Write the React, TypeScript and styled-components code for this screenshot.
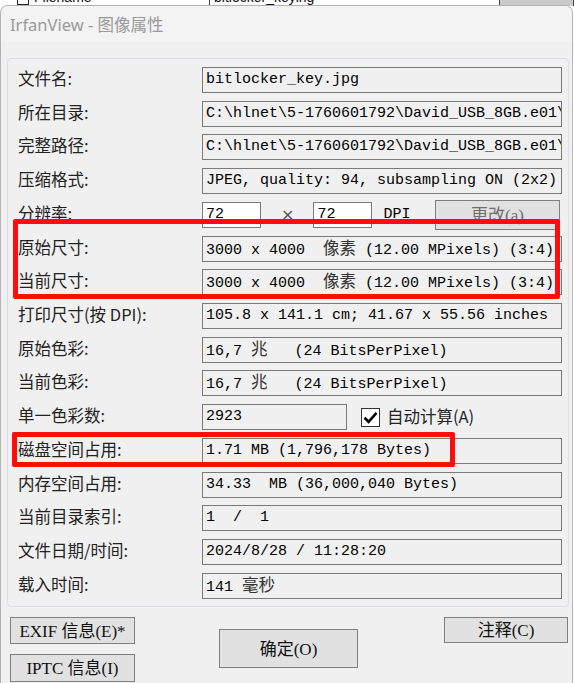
import React from 'react';
import styled, { createGlobalStyle } from 'styled-components';

const GlobalStyle = createGlobalStyle`
  html, body { margin: 0; padding: 0; background: #f0f0f0; }
  body { font-family: "Noto Sans CJK SC", "Noto Sans", sans-serif; }
`;

const Screen = styled.div`
  position: relative;
  width: 574px;
  height: 683px;
  overflow: hidden;
  background: #ffffff;
  display: flex;
  flex-direction: column;
`;

const BehindStrip = styled.div`
  flex: none;
  height: 6px;
  overflow: hidden;
  display: flex;
  align-items: flex-start;
  background: #ffffff;
  font-family: "Liberation Sans", sans-serif;
  font-size: 14px;
  color: #111;
`;

const BehindCell = styled.div<{ $w: number; $dark?: boolean }>`
  flex: none;
  width: ${(p) => p.$w}px;
  height: 6px;
  box-sizing: border-box;
  border-right: 1px solid #444;
  background: ${(p) => (p.$dark ? '#c9c9c9' : '#ffffff')};
  overflow: hidden;
  display: flex;
  gap: 5px;
  padding-left: 4px;
`;

const BehindText = styled.span`
  display: block;
  margin-top: -11px;
  line-height: 16px;
  white-space: nowrap;
`;

const BehindBox = styled.span`
  display: block;
  margin-top: -8px;
  width: 10px;
  height: 11px;
  border: 1px solid #222;
  flex: none;
`;

const Window = styled.div`
  flex: 1;
  margin-top: -1px;
  width: 573px;
  box-sizing: border-box;
  display: flex;
  flex-direction: column;
  background: #f0f0f0;
  border: 1px solid #b4b4b4;
  border-bottom: none;
  border-radius: 8px 8px 0 0;
  overflow: hidden;
`;

const TitleBar = styled.div`
  flex: none;
  height: 36px;
  display: flex;
  align-items: center;
  padding-left: 9px;
  background: #f3f3f3;
  color: #9a9a9a;
  font-family: "Noto Sans", "Noto Sans CJK SC", sans-serif;
  font-size: 16.5px;
`;

const Body = styled.div`
  display: flex;
  flex-direction: column;
  padding: 16px 0 0 6px;
`;

const GroupBox = styled.div`
  width: 562px;
  box-sizing: border-box;
  border: 1px solid #d7dee4;
  border-radius: 4px;
  padding: 8px 0 7px 10px;
  display: grid;
  grid-template-columns: 184px 360px;
  grid-auto-rows: 26px;
  row-gap: 7.73px;
  align-items: center;
`;

const Label = styled.div`
  font-family: "Noto Sans CJK SC", sans-serif;
  font-size: 16.5px;
  color: #222;
  white-space: pre;
  line-height: 22px;
  padding-bottom: 4px;
`;

const Field = styled.div<{ $white?: boolean; $w?: number }>`
  box-sizing: border-box;
  height: 26px;
  width: ${(p) => (p.$w ? `${p.$w}px` : '100%')};
  border: 1px solid #7a7a7a;
  background: ${(p) => (p.$white ? '#ffffff' : '#f0f0f0')};
  padding: 0 3px;
  font-family: "Liberation Mono", "Noto Sans CJK SC", monospace;
  font-size: 15px;
  line-height: 23px;
  color: #000;
  white-space: pre;
  overflow: hidden;
`;

const Cjk = styled.span`
  font-family: "Noto Sans CJK SC", sans-serif;
  font-size: 16.5px;
  line-height: 20px;
  color: #333;
`;

const InlineRow = styled.div`
  display: flex;
  align-items: center;
  height: 26px;
`;

const Times = styled.span`
  margin: 0 19px 0 20px;
  font-family: "DejaVu Sans", sans-serif;
  font-size: 16px;
  color: #555;
`;

const Unit = styled.span`
  margin-left: 11px;
  font-family: "Liberation Mono", monospace;
  font-size: 15px;
  color: #000;
`;

const Button = styled.button<{ $w: number; $h: number; $muted?: boolean }>`
  box-sizing: border-box;
  width: ${(p) => p.$w}px;
  height: ${(p) => p.$h}px;
  flex: none;
  padding: 0 0 2px;
  border: 1px solid #7f7f7f;
  background: #e1e1e1;
  color: ${(p) => (p.$muted ? '#6d6d6d' : '#111')};
  font-family: "Liberation Serif", "Noto Sans CJK SC", serif;
  font-size: 17px;
  display: flex;
  align-items: center;
  justify-content: center;
  white-space: pre;
`;

const ChangeButton = styled(Button)`
  margin-left: auto;
  margin-right: 2px;
`;

const Check = styled.span`
  margin-left: 14px;
  width: 19px;
  height: 19px;
  box-sizing: border-box;
  border: 1px solid #333;
  background: #fff;
  display: flex;
  align-items: center;
  justify-content: center;
  flex: none;
`;

const CheckLabel = styled.span`
  margin-left: 7px;
  padding-bottom: 3px;
  font-family: "Noto Sans CJK SC", sans-serif;
  font-size: 16.5px;
  color: #222;
  white-space: pre;
`;

const Footer = styled.div`
  display: flex;
  align-items: flex-start;
  padding: 10px 0 0 3px;
`;

const ButtonStack = styled.div`
  display: flex;
  flex-direction: column;
  gap: 10px;
`;

const OkButton = styled(Button)`
  margin: 12px 0 0 84px;
`;

const NoteButton = styled(Button)`
  margin-left: 86px;
`;

const Highlight = styled.div`
  position: absolute;
  box-sizing: border-box;
  border: 5px solid #ff0d0d;
  border-radius: 2px;
  pointer-events: none;
`;

type Row = { label: string; value: React.ReactNode };

const dim = (
  <>
    3000 x 4000  <Cjk>像素</Cjk> (12.00 MPixels) (3:4)
  </>
);
const color = (
  <>
    16,7 <Cjk>兆</Cjk>   (24 BitsPerPixel)
  </>
);

const rowsTop: Row[] = [
  { label: '文件名:', value: 'bitlocker_key.jpg' },
  { label: '所在目录:', value: 'C:\\hlnet\\5-1760601792\\David_USB_8GB.e01\\' },
  { label: '完整路径:', value: 'C:\\hlnet\\5-1760601792\\David_USB_8GB.e01\\' },
  { label: '压缩格式:', value: 'JPEG, quality: 94, subsampling ON (2x2)' },
];

const rowsMid: Row[] = [
  { label: '原始尺寸:', value: dim },
  { label: '当前尺寸:', value: dim },
  { label: '打印尺寸(按 DPI):', value: '105.8 x 141.1 cm; 41.67 x 55.56 inches' },
  { label: '原始色彩:', value: color },
  { label: '当前色彩:', value: color },
];

const rowsBottom: Row[] = [
  { label: '磁盘空间占用:', value: '1.71 MB (1,796,178 Bytes)' },
  { label: '内存空间占用:', value: '34.33  MB (36,000,040 Bytes)' },
  { label: '当前目录索引:', value: '1  /  1' },
  { label: '文件日期/时间:', value: '2024/8/28 / 11:28:20' },
  { label: '载入时间:', value: <>141 <Cjk>毫秒</Cjk></> },
];

const renderRows = (rows: Row[]) =>
  rows.map((r, i) => (
    <React.Fragment key={r.label + i}>
      <Label>{r.label}</Label>
      <Field>{r.value}</Field>
    </React.Fragment>
  ));

export default function App() {
  return (
    <>
      <GlobalStyle />
      <Screen>
        <BehindStrip>
          <BehindCell $w={210}>
            <BehindBox style={{ marginLeft: 13 }} />
            <BehindText>Filename</BehindText>
          </BehindCell>
          <BehindCell $w={290}>
            <BehindText>bitlocker_keying</BehindText>
          </BehindCell>
          <BehindCell $w={74} $dark />
        </BehindStrip>
        <Window>
          <TitleBar>IrfanView - 图像属性</TitleBar>
          <Body>
            <GroupBox>
              {renderRows(rowsTop)}
              <Label>分辨率:</Label>
              <InlineRow>
                <Field $white $w={59}>72</Field>
                <Times>×</Times>
                <Field $white $w={59}>72</Field>
                <Unit>DPI</Unit>
                <ChangeButton $w={125} $h={30} $muted>更改(a)</ChangeButton>
              </InlineRow>
              {renderRows(rowsMid)}
              <Label>单一色彩数:</Label>
              <InlineRow>
                <Field $w={145}>2923</Field>
                <Check>
                  <svg width="15" height="13" viewBox="0 0 15 13">
                    <path d="M1.5 6.8 L5.6 10.8 L13.5 1.8" fill="none" stroke="#000" strokeWidth="2.6" />
                  </svg>
                </Check>
                <CheckLabel>自动计算(A)</CheckLabel>
              </InlineRow>
              {renderRows(rowsBottom)}
            </GroupBox>
            <Footer>
              <ButtonStack>
                <Button $w={125} $h={27}>EXIF 信息(E)*</Button>
                <Button $w={125} $h={28}>IPTC 信息(I)</Button>
              </ButtonStack>
              <OkButton $w={139} $h={39}>确定(O)</OkButton>
              <NoteButton $w={124} $h={26}>注释(C)</NoteButton>
            </Footer>
          </Body>
        </Window>
        <Highlight style={{ left: 13, top: 219, width: 547, height: 80 }} />
        <Highlight style={{ left: 12, top: 432, width: 443, height: 35 }} />
      </Screen>
    </>
  );
}
